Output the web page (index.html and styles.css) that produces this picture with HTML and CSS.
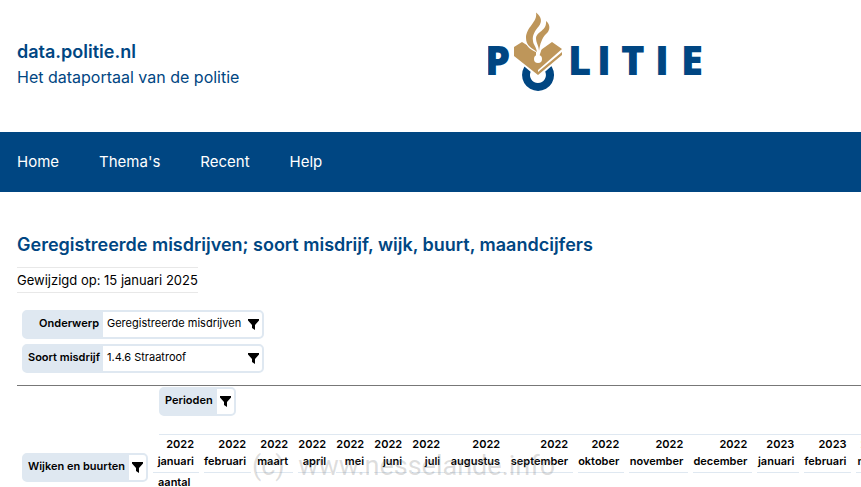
FILE: index.html
```html
<!DOCTYPE html>
<html lang="nl">

<head>
    <meta charset="UTF-8">
    <meta name="viewport" content="width=device-width, initial-scale=1.0">
    <title>data.politie.nl</title>

    <link rel="stylesheet" href="styles.css">
</head>

<body>
    <svg class="symbols" aria-hidden="true">
        <symbol id="filter" viewBox="0 0 12 12">
            <path d="M1 0h11v1.500L8 6V11L5 9V6L1 1.500z" />
        </symbol>
    </svg>

    <header class="header">
        <div class="site">
            <p class="site-name">data.politie.nl</p>
            <p class="site-slogan">Het dataportaal van de politie</p>
        </div>
        <svg class="logo" viewBox="0 0 220 86" role="img" aria-label="Politie">
            <g class="logo-blue">
                <text class="logo-text" y="63" x="-3 80 109 133 167 193">PLITIE</text>
                <path fill-rule="evenodd" d="M50 47a16 16 0 1 0 .1 0zM50 55a8 8 0 1 1-.1 0z" />
            </g>
            <path class="logo-page" d="M25 45L50 66L76 43V38H25z" />
            <g class="logo-gold">
                <path d="M26 35L34 30L50 40L64 30L74 37L50 58V60L74 40V43L50 63L26 44z" />
                <path class="logo-page" d="M38 31C39 35 43 38 48 40V45H51L53 39C54 34 59 32 62 27H38z" />
                <path d="M48 .5C54 5 54 10 51 14C47 19 44 23 45 29C45 32 48 34 49 40C44 36 38 34 38 26C38 15 50 10 48 .5z" />
                <path d="M58 9C63 13 62 19 58 22C54 26 52 32 51 39C51 34 48 31 48 26C49 19 59 19 58 9z" />
            </g>
            <circle class="logo-page" cx="50" cy="47" r="4" />
        </svg>
    </header>

    <nav class="nav">
        <a href="#">Home</a>
        <a href="#">Thema's</a>
        <a href="#">Recent</a>
        <a href="#">Help</a>
    </nav>

    <main class="main">
        <h1>Geregistreerde misdrijven; soort misdrijf, wijk, buurt, maandcijfers</h1>
        <p class="modified">Gewijzigd op: 15 januari 2025</p>

        <div class="filters">
            <div class="chip">
                <span class="chip-label">Onderwerp</span>
                <span class="chip-value">Geregistreerde misdrijven</span>
                <button class="chip-button" aria-label="Filter onderwerp"><svg><use href="#filter" /></svg></button>
            </div>
            <div class="chip">
                <span class="chip-label">Soort misdrijf</span>
                <span class="chip-value">1.4.6 Straatroof</span>
                <button class="chip-button" aria-label="Filter soort misdrijf"><svg><use href="#filter" /></svg></button>
            </div>
        </div>

        <div class="pivot">
            <table>
                <colgroup>
                    <col class="c-area">
                    <col class="c-46">
                    <col class="c-47">
                    <col class="c-37">
                    <col class="c-33" span="4">
                    <col class="c-55">
                    <col class="c-63">
                    <col class="c-46">
                    <col class="c-59" span="2">
                    <col class="c-42">
                    <col class="c-46">
                    <col class="c-37">
                </colgroup>
                <thead>
                    <tr>
                        <td></td>
                        <th class="periods" colspan="15">
                            <div class="chip">
                                <span class="chip-label">Perioden</span>
                                <button class="chip-button" aria-label="Filter perioden"><svg><use href="#filter" /></svg></button>
                            </div>
                        </th>
                    </tr>
                    <tr class="months">
                        <th class="areas" rowspan="2">
                            <div class="chip">
                                <span class="chip-label">Wijken en buurten</span>
                                <button class="chip-button" aria-label="Filter wijken en buurten"><svg><use href="#filter" /></svg></button>
                            </div>
                        </th>
                        <th>2022<br>januari</th>
                        <th>2022<br>februari</th>
                        <th>2022<br>maart</th>
                        <th>2022<br>april</th>
                        <th>2022<br>mei</th>
                        <th>2022<br>juni</th>
                        <th>2022<br>juli</th>
                        <th>2022<br>augustus</th>
                        <th>2022<br>september</th>
                        <th>2022<br>oktober</th>
                        <th>2022<br>november</th>
                        <th>2022<br>december</th>
                        <th>2023<br>januari</th>
                        <th>2023<br>februari</th>
                        <th>2023<br>maart</th>
                    </tr>
                    <tr>
                        <th class="unit" colspan="15">aantal</th>
                    </tr>
                </thead>
            </table>
            <span class="watermark">(c) &nbsp;www.nesselande.info</span>
        </div>
    </main>
</body>

</html>
```
FILE: styles.css
```css
* {
    box-sizing: border-box;
    margin: 0;
    padding: 0;
}

body {
    font-family: Inter, "Liberation Sans", sans-serif;
    font-size: 11px;
    color: #000;
    background: #fff;
    overflow: hidden;
}

.symbols {
    display: none;
}

.header {
    display: grid;
    grid-template-columns: 55% 1fr;
    align-items: start;
    height: 132px;
    padding: 12px 17px;
    color: #004682;
}

.site {
    padding-top: 27px;
}

.site-name {
    font-size: 18px;
    line-height: 26px;
    font-weight: 600;
}

.site-slogan {
    font-size: 16px;
    line-height: 24px;
}

.logo {
    width: 220px;
    height: 86px;
    margin-left: 16px;
}

.logo-text {
    font-family: "Open Sans", "Noto Sans", sans-serif;
    font-size: 40px;
    font-weight: 800;
}

.logo-blue {
    fill: #004682;
}

.logo-gold {
    fill: #be965a;
}

.logo-page {
    fill: #fff;
}

.nav {
    display: flex;
    align-items: center;
    gap: 40px;
    height: 60px;
    padding: 0 17px 2px;
    background: #004682;
}

.nav a {
    font-size: 15px;
    font-weight: 400;
    color: #fff;
    text-decoration: none;
}

.main {
    padding: 40px 0 0 17px;
}

h1 {
    font-size: 18px;
    line-height: 26px;
    font-weight: 600;
    color: #004682;
}

.modified {
    width: max-content;
    margin-top: 9px;
    border-top: 1px solid #e8e8e8;
    border-bottom: 1px solid #e8e8e8;
    font-size: 13px;
    line-height: 24px;
}

.filters {
    display: grid;
    grid-template-columns: 242px;
    gap: 5px;
    padding: 17px 5px 12px;
}

.chip {
    display: flex;
    height: 29px;
    border: 2px solid #dfe8f1;
    border-radius: 5px;
    background: #fff;
    white-space: nowrap;
}

.chip-label {
    padding: 0 4px;
    background: #dfe8f1;
    font-weight: 600;
    line-height: 23px;
}

.filters .chip-label {
    width: 79px;
    text-align: right;
}

.chip-value {
    flex: 1;
    padding-left: 4px;
    line-height: 23px;
}

.chip-button {
    width: 19px;
    border: 0;
    background: none;
}

.chip-button svg {
    display: block;
    width: 12px;
    height: 12px;
    margin: 0 auto;
}

.pivot {
    position: relative;
    border-top: 1px solid #777;
    overflow: hidden;
}

.pivot table {
    width: max-content;
    border-spacing: 5px 0;
    margin-top: 1px;
}

.pivot th {
    font-weight: 600;
    line-height: 17px;
    white-space: nowrap;
}

.c-area {
    width: 126px;
}

.c-33 {
    width: 33px;
}

.c-37 {
    width: 37px;
}

.c-42 {
    width: 42px;
}

.c-46 {
    width: 46px;
}

.c-47 {
    width: 47px;
}

.c-55 {
    width: 55px;
}

.c-59 {
    width: 59px;
}

.c-63 {
    width: 63px;
}

.periods {
    padding-left: 6px;
}

.periods::after {
    content: "";
    display: block;
    margin-top: 18px;
    border-top: 1px solid #dfe8f1;
}

.periods .chip {
    width: 77px;
}

.areas .chip {
    width: 126px;
}

.pivot .chip-label {
    flex: 1;
    line-height: 23px;
    text-align: left;
}

.months th {
    padding: 1px 5px 2px 0;
    border-bottom: 1px solid #dfe8f1;
    text-align: right;
}

.months .areas {
    padding: 18px 0 0;
    border: 0;
    vertical-align: top;
}

.pivot .unit {
    padding-left: 5px;
    text-align: left;
    line-height: 18px;
}

.watermark {
    position: absolute;
    top: 65px;
    left: 235px;
    font-family: Roboto, sans-serif;
    font-size: 27px;
    line-height: 30px;
    color: rgba(120, 120, 120, 0.25);
    pointer-events: none;
}
```
